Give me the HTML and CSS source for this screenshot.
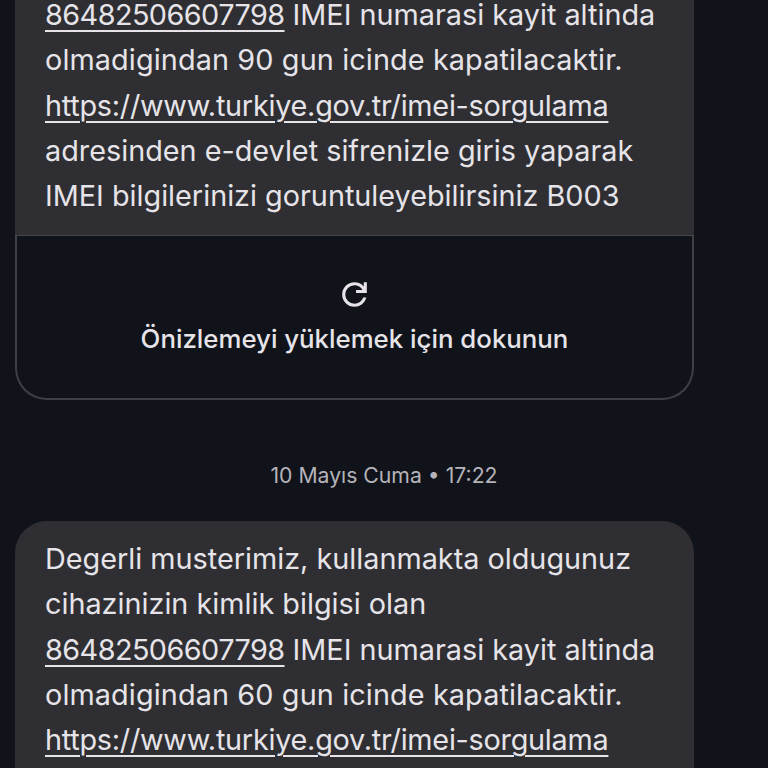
FILE: index.html
```html
<!DOCTYPE html>
<html lang="tr">
<head>
<meta charset="utf-8">
<title>Mesajlar</title>
<link rel="stylesheet" href="styles.css">
</head>
<body>
<main class="thread">
  <article class="message message-first">
    <div class="bubble bubble-attached">
      <p class="line"><a class="link link-number">86482506607798</a> IMEI numarasi kayit altinda</p>
      <p class="line line-wide">olmadigindan 90 gun icinde kapatilacaktir.</p>
      <p class="line"><a class="link link-url">https://www.turkiye.gov.tr/imei-sorgulama</a></p>
      <p class="line">adresinden e-devlet sifrenizle giris yaparak</p>
      <p class="line">IMEI bilgilerinizi goruntuleyebilirsiniz B003</p>
    </div>
    <div class="preview">
      <svg class="reload" viewBox="0 -960 960 960" aria-hidden="true">
        <path d="M480-160q-134 0-227-93t-93-227q0-134 93-227t227-93q69 0 132 28.5T720-690v-110h80v280H520v-80h168q-32-56-87.5-88T480-720q-100 0-170 70t-70 170q0 100 70 170t170 70q77 0 139-44t87-116h84q-28 106-114 173t-196 67Z"/>
      </svg>
      <span class="preview-label">Önizlemeyi yüklemek için dokunun</span>
    </div>
  </article>
  <div class="stamp">10 Mayıs Cuma • 17:22</div>
  <article class="message">
    <div class="bubble bubble-open">
      <p class="line">Degerli musterimiz, kullanmakta oldugunuz</p>
      <p class="line">cihazinizin kimlik bilgisi olan</p>
      <p class="line"><a class="link link-number">86482506607798</a> IMEI numarasi kayit altinda</p>
      <p class="line line-wide">olmadigindan 60 gun icinde kapatilacaktir.</p>
      <p class="line"><a class="link link-url">https://www.turkiye.gov.tr/imei-sorgulama</a></p>
    </div>
  </article>
</main>
</body>
</html>
```
FILE: styles.css
```css
html, body {
  margin: 0;
  padding: 0;
  width: 768px;
  height: 768px;
  overflow: hidden;
  background: #10131a;
}
.thread {
  display: flex;
  flex-direction: column;
  padding: 0 74px 0 15px;
  font-family: Inter, "Noto Sans", sans-serif;
  color: #e6e4e9;
}
.message { display: flex; flex-direction: column; }
.bubble {
  padding: 14.5px 20px 0 30px;
  background: #2f2f33;
  border-radius: 32px;
}
.message-first .bubble { padding-top: 0; }
.bubble-attached {
  border-radius: 0;
  padding-bottom: 17px;
  border-bottom: 1px solid #47474b;
}
.bubble-open {
  padding-bottom: 40px;
  border-radius: 32px 32px 0 0;
}
.line {
  margin: 0;
  height: 45.3px;
  line-height: 45.3px;
  font-size: 28.8px;
  white-space: nowrap;
}
.line-wide { letter-spacing: 0.12px; }
.message-first .line:first-child {
  height: 37.3px;
  line-height: 29.3px;
}
.link {
  text-decoration: underline;
  text-decoration-thickness: 2px;
  text-underline-offset: 5px;
}
.link-number { letter-spacing: -0.55px; }
.link-url { letter-spacing: -0.25px; }
.preview {
  display: flex;
  flex-direction: column;
  align-items: center;
  box-sizing: border-box;
  height: 164px;
  padding-top: 40px;
  gap: 9px;
  border: 2px solid #3e4046;
  border-top: 0;
  border-radius: 0 0 32px 32px;
}
.reload { width: 37px; height: 37px; fill: #e6e4e9; }
.preview-label { font-size: 25.8px; line-height: 33px; font-weight: 500; }
.stamp {
  margin-top: 55px;
  margin-right: -59px;
  height: 40px;
  line-height: 40px;
  text-align: center;
  font-size: 21.2px;
  color: #b5b3b9;
}
.stamp + .message { margin-top: 26px; }
```
